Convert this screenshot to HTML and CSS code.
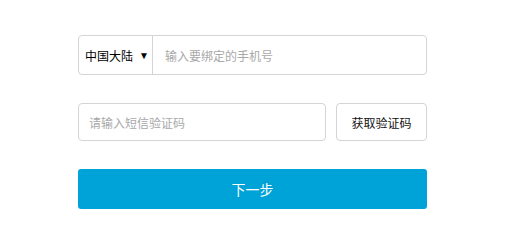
FILE: index.html
```html
<!DOCTYPE html>
<html lang="zh-CN">
<head>
<meta charset="utf-8">
<link rel="stylesheet" href="styles.css">
</head>
<body>
<div class="form">
  <div class="phone-row">
    <div class="region">中国大陆<span class="arrow">▼</span></div>
    <div class="phone-input">输入要绑定的手机号</div>
  </div>
  <div class="code-row">
    <div class="code-input">请输入短信验证码</div>
    <div class="code-btn">获取验证码</div>
  </div>
  <div class="next-btn">下一步</div>
</div>
</body>
</html>
```

FILE: styles.css
```css
html, body {
  margin: 0;
  padding: 0;
  background: #fff;
}
body {
  font-family: "Liberation Sans", "Noto Sans CJK SC", sans-serif;
  font-size: 12px;
}
.form {
  width: 349px;
  margin-left: 78px;
  padding-top: 35px;
  display: flex;
  flex-direction: column;
}
.phone-row {
  height: 40px;
  box-sizing: border-box;
  border: 1px solid #d4d4d8;
  border-radius: 4px;
  display: flex;
  align-items: center;
}
.region {
  width: 74px;
  height: 100%;
  box-sizing: border-box;
  border-right: 1px solid #d4d4d8;
  display: flex;
  align-items: center;
  padding-left: 6px;
  color: #000;
}
.arrow {
  font-size: 10px;
  margin-left: 6px;
  color: #000;
}
.phone-input {
  padding-left: 12px;
  color: #a8a8a8;
}
.code-row {
  margin-top: 28px;
  height: 38px;
  display: flex;
  gap: 10px;
}
.code-input {
  flex: 1;
  box-sizing: border-box;
  border: 1px solid #d4d4d8;
  border-radius: 4px;
  display: flex;
  align-items: center;
  padding-left: 10px;
  color: #a8a8a8;
}
.code-btn {
  width: 91px;
  box-sizing: border-box;
  border: 1px solid #d4d4d8;
  border-radius: 4px;
  display: flex;
  align-items: center;
  justify-content: center;
  color: #111;
}
.next-btn {
  margin-top: 28px;
  height: 40px;
  background: #00a3d7;
  border-radius: 3px;
  color: #fff;
  font-size: 14px;
  display: flex;
  align-items: center;
  justify-content: center;
}
```
